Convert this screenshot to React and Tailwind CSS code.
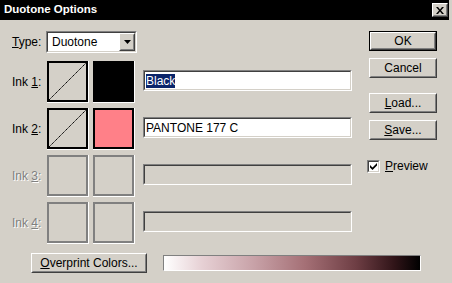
import React from "react";

const sunken =
  "border border-t-[#808080] border-l-[#808080] border-b-white border-r-white";
const sunkenInner =
  "border border-t-[#404040] border-l-[#404040] border-b-[#d4d0c8] border-r-[#d4d0c8]";

const Button = ({ children, def, className = "" }) => (
  <div className={`${def ? "border border-black" : ""} bg-[#d4d0c8] shrink-0 ${className}`}>
    <div className="border border-t-white border-l-white border-b-[#404040] border-r-[#404040] h-full">
      <div className="border border-t-[#d4d0c8] border-l-[#d4d0c8] border-b-[#808080] border-r-[#808080] h-full flex items-center justify-center text-[12px] text-black">
        {children}
      </div>
    </div>
  </div>
);

const TextBox = ({ children, disabled }) => (
  <div className={`${sunken} w-[209px] h-[21px]`}>
    <div
      className={`${sunkenInner} h-full flex items-center pl-[1px] text-[12px] ${
        disabled ? "bg-[#d4d0c8]" : "bg-white"
      }`}
    >
      {children}
    </div>
  </div>
);

const Swatch = ({ color, diag, disabled }) => (
  <div className="border-b border-r border-white">
    <div
      className={`w-[41px] h-[41px] border-2 ${
        disabled ? "border-[#808080]" : "border-black"
      }`}
      style={{ backgroundColor: color }}
    >
      {diag && (
        <svg width="37" height="37" viewBox="0 0 37 37">
          <line x1="0" y1="37" x2="37" y2="0" stroke="black" strokeWidth="1" strokeDasharray="1.5 0.5" />
        </svg>
      )}
    </div>
  </div>
);

const InkRow = ({ n, color, name, selected, disabled }) => (
  <div className="flex items-start h-[42px]">
    <div className="w-[35px] h-[42px] flex items-center text-[12px]">
      <span className={disabled ? "text-[#808080] [text-shadow:1px_1px_0_white]" : "text-black"}>
        Ink <span className="underline">{n}</span>:
      </span>
    </div>
    <Swatch color="#d4d0c8" diag={!disabled} disabled={disabled} />
    <div className="ml-[4px]">
      <Swatch color={disabled ? "#d4d0c8" : color} disabled={disabled} />
    </div>
    <div className="ml-[8px] mt-[9px]">
      <TextBox disabled={disabled}>
        {selected ? (
          <span className="bg-[#0a246a] text-white leading-[14px]">{name}</span>
        ) : (
          <span className="text-black">{name}</span>
        )}
      </TextBox>
    </div>
  </div>
);

export default function App() {
  return (
    <div className="w-[452px] h-[283px] bg-[#d4d0c8] flex flex-col font-['Liberation_Sans',Arial,sans-serif] overflow-hidden border-r-[3px] border-r-[#d4d0c8]">
      <div className="h-[20px] bg-black flex items-center justify-between pl-[4px] pr-[1px] shrink-0">
        <span className="text-white font-bold text-[11.5px]">Duotone Options</span>
        <Button className="w-[16px] h-[14px]">
          <svg width="8" height="7" viewBox="0 0 8 7">
            <path d="M0 0L2 0L4 2.5L6 0L8 0L5 3.5L8 7L6 7L4 4.5L2 7L0 7L3 3.5Z" fill="black" />
          </svg>
        </Button>
      </div>
      <div className="flex">
        <div className="pl-[12px] pt-[11px] w-[357px]">
          <div className="flex items-center h-[22px]">
            <span className="w-[34px] text-[12px] text-black">
              <span className="underline">T</span>ype:
            </span>
            <div className={`${sunken} w-[91px] h-[22px]`}>
              <div className={`${sunkenInner} h-full bg-white flex items-center justify-between`}>
                <span className="pl-[4px] text-[12px] text-black">Duotone</span>
                <Button className="w-[16px] h-[18px]">
                  <svg width="7" height="4" viewBox="0 0 7 4">
                    <path d="M0 0H7L3.5 4Z" fill="black" />
                  </svg>
                </Button>
              </div>
            </div>
          </div>
          <div className="flex flex-col gap-[5px] mt-[8px]">
            <InkRow n="1" color="#000000" name="Black" selected />
            <InkRow n="2" color="#ff8088" name="PANTONE 177 C" />
            <InkRow n="3" name="" disabled />
            <InkRow n="4" name="" disabled />
          </div>
        </div>
        <div className="pl-[12px] pt-[11px] flex flex-col">
          <Button def className="w-[68px] h-[20px]">OK</Button>
          <Button className="w-[68px] h-[20px] mt-[7px]">Cancel</Button>
          <Button className="w-[68px] h-[20px] mt-[15px]">
            <span>
              <span className="underline">L</span>oad...
            </span>
          </Button>
          <Button className="w-[68px] h-[20px] mt-[7px]">
            <span>
              <span className="underline">S</span>ave...
            </span>
          </Button>
          <div className="flex items-center mt-[17px] -ml-[2px]">
            <div className={`${sunken} w-[13px] h-[13px]`}>
              <div className={`${sunkenInner} h-full bg-white flex items-center justify-center`}>
                <svg width="7" height="7" viewBox="0 0 7 7">
                  <path d="M0 2L0 4.5L2.5 7L7 2.5L7 0L2.5 4.5Z" fill="black" />
                </svg>
              </div>
            </div>
            <span className="ml-[5px] text-[12px] text-black">
              <span className="underline">P</span>review
            </span>
          </div>
        </div>
      </div>
      <div className="flex items-center pl-[31px] mt-[9px]">
        <Button className="w-[116px] h-[20px]">
          <span>
            <span className="underline">O</span>verprint Colors...
          </span>
        </Button>
        <div className={`${sunken} ml-[16px] w-[258px] h-[16px]`}>
          <div className="h-full bg-[linear-gradient(to_right,#ffffff_0%,#e6d0d4_15%,#c8a2a8_35%,#a57076_55%,#6e3e44_75%,#301418_90%,#000000_100%)]" />
        </div>
      </div>
    </div>
  );
}
